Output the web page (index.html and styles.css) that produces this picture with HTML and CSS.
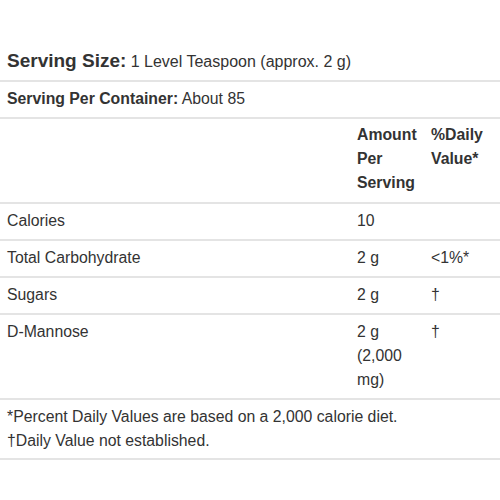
FILE: index.html
```html
<!DOCTYPE html>
<html>
<head>
<meta charset="utf-8">
<link rel="stylesheet" href="styles.css">
</head>
<body>
<div class="facts">
  <div class="size"><span class="size-label">Serving Size:</span> <span class="size-val">1 Level Teaspoon (approx. 2 g)</span></div>
  <div class="per"><b>Serving Per Container:</b> About 85</div>
  <table class="tbl">
    <colgroup><col><col class="c-amt"><col class="c-dv"></colgroup>
    <tr class="head"><th></th><th>Amount Per Serving</th><th>%Daily Value*</th></tr>
    <tr><td>Calories</td><td>10</td><td></td></tr>
    <tr><td>Total Carbohydrate</td><td>2 g</td><td>&lt;1%*</td></tr>
    <tr><td>Sugars</td><td>2 g</td><td>†</td></tr>
    <tr><td>D-Mannose</td><td>2 g (2,000 mg)</td><td>†</td></tr>
  </table>
  <div class="notes">*Percent Daily Values are based on a 2,000 calorie diet.<br>†Daily Value not established.</div>
</div>
</body>
</html>
```
FILE: styles.css
```css
html, body { margin: 0; padding: 0; background: #fff; }
body {
  font-family: "Liberation Sans", Arial, sans-serif;
  font-size: 15.8px;
  line-height: 24px;
  color: #333;
}
.facts { padding-top: 38px; }
.size {
  padding: 8px 7px 3px;
  line-height: 30px;
  border-bottom: 2px solid #e4e4e4;
}
.size-label { font-weight: bold; font-size: 19px; }
.size-val { font-size: 16px; }
.per {
  padding: 5px 7px 6px;
  border-bottom: 2px solid #e4e4e4;
}
.tbl {
  width: 100%;
  border-collapse: collapse;
  table-layout: fixed;
}
.c-amt { width: 74px; }
.c-dv { width: 76px; }
.tbl th, .tbl td {
  text-align: left;
  vertical-align: top;
  padding: 5px 7px 6px;
  border-bottom: 2px solid #e4e4e4;
}
.tbl th { font-weight: bold; padding-top: 4px; padding-bottom: 7px; }
.notes {
  padding: 5px 7px 5px;
  border-bottom: 2px solid #e4e4e4;
}
```
